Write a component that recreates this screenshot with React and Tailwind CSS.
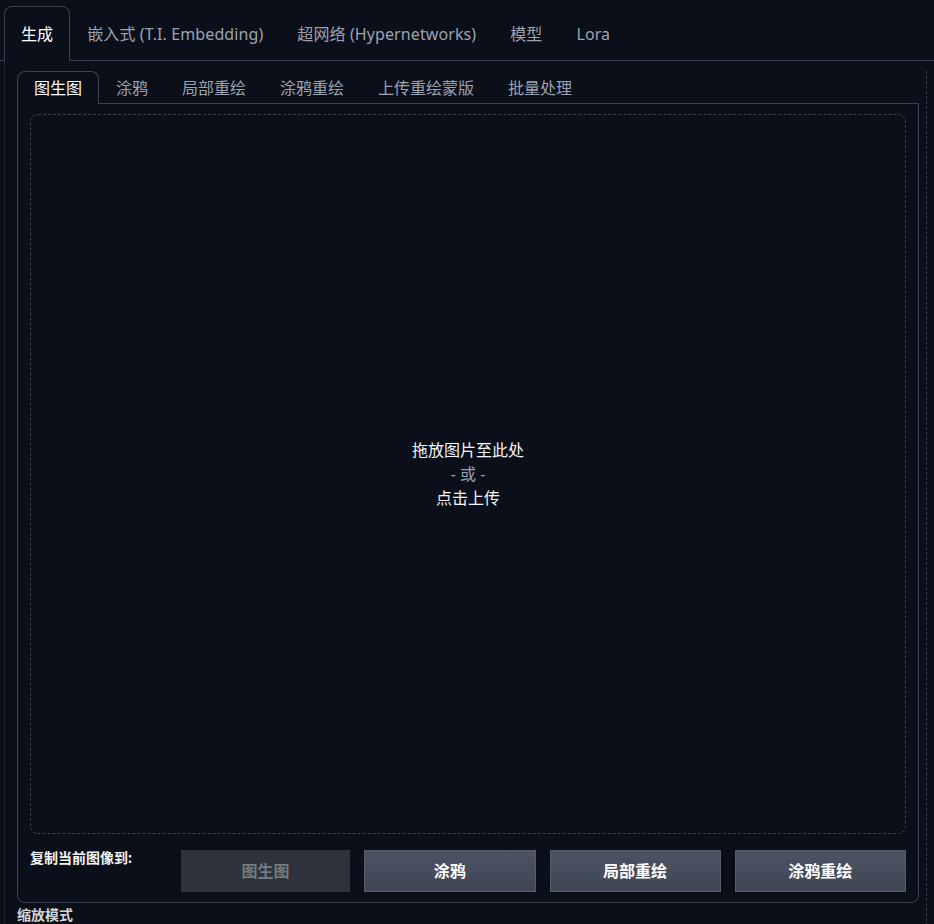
import React from "react";

const font = { fontFamily: '"Segoe UI", "Noto Sans", "Noto Sans CJK SC", sans-serif' };

function Tab({ label, active }) {
  return (
    <div
      className={
        "px-4 flex items-center border border-b-0 rounded-t-lg whitespace-nowrap " +
        (active ? "border-[#374151] text-white bg-[#0b0f19] relative -mb-px" : "border-transparent text-[#9ca3af]")
      }
    >
      {label}
    </div>
  );
}

export default function App() {
  const outerTabs = ["生成", "嵌入式 (T.I. Embedding)", "超网络 (Hypernetworks)", "模型", "Lora"];
  const innerTabs = ["图生图", "涂鸦", "局部重绘", "涂鸦重绘", "上传重绘蒙版", "批量处理"];
  return (
    <div className="w-[934px] h-[924px] overflow-hidden bg-[#0b0f19] text-[16px]" style={font}>
      {/* outer tab bar */}
      <div className="pt-[6px] pl-[4px] flex h-[61px] border-b border-[#374151] tracking-[0.1px]">
        {outerTabs.map((t, i) => (
          <Tab key={t} label={t} active={i === 0} />
        ))}
      </div>
      {/* outer panel */}
      <div className="ml-[4px] border-l border-[#1f2533] pl-[12px] pt-[10px] flex gap-[7px] h-[900px]">
        <div className="w-[902px] shrink-0 flex flex-col">
          <div className="flex h-[33px] border-b border-[#374151]">
            {innerTabs.map((t, i) => (
              <Tab key={t} label={t} active={i === 0} />
            ))}
          </div>
          <div className="border border-t-0 border-[#374151] rounded-b-lg px-[12px] pt-[10px] pb-[10px] flex flex-col gap-[16px]">
            <div className="h-[720px] border border-dashed border-[#374151] rounded-lg flex flex-col items-center justify-center text-[16px] leading-[24px]">
              <div className="text-[#f3f4f6]">拖放图片至此处</div>
              <div className="text-[#9ca3af]">- 或 -</div>
              <div className="text-[#f3f4f6]">点击上传</div>
            </div>
            <div className="flex gap-[14px]">
              <div className="w-[137px] shrink-0 text-[14px] font-bold text-[#f3f4f6] leading-[16px]">
                复制当前图像到:
              </div>
              <button className="flex-1 h-[42px] bg-[#2e323c] text-[#75797f] font-bold text-[16px]">
                图生图
              </button>
              {["涂鸦", "局部重绘", "涂鸦重绘"].map((b) => (
                <button
                  key={b}
                  className="flex-1 h-[42px] border border-[#565d6b] bg-gradient-to-b from-[#4c5363] to-[#3f4655] text-white font-bold text-[16px]"
                >
                  {b}
                </button>
              ))}
            </div>
          </div>
          <div className="pt-[3px] text-[14px] font-bold text-[#d1d5db] leading-[18px]">缩放模式</div>
        </div>
        <div className="flex-1 border-l border-dashed border-[#374151]"></div>
      </div>
    </div>
  );
}
